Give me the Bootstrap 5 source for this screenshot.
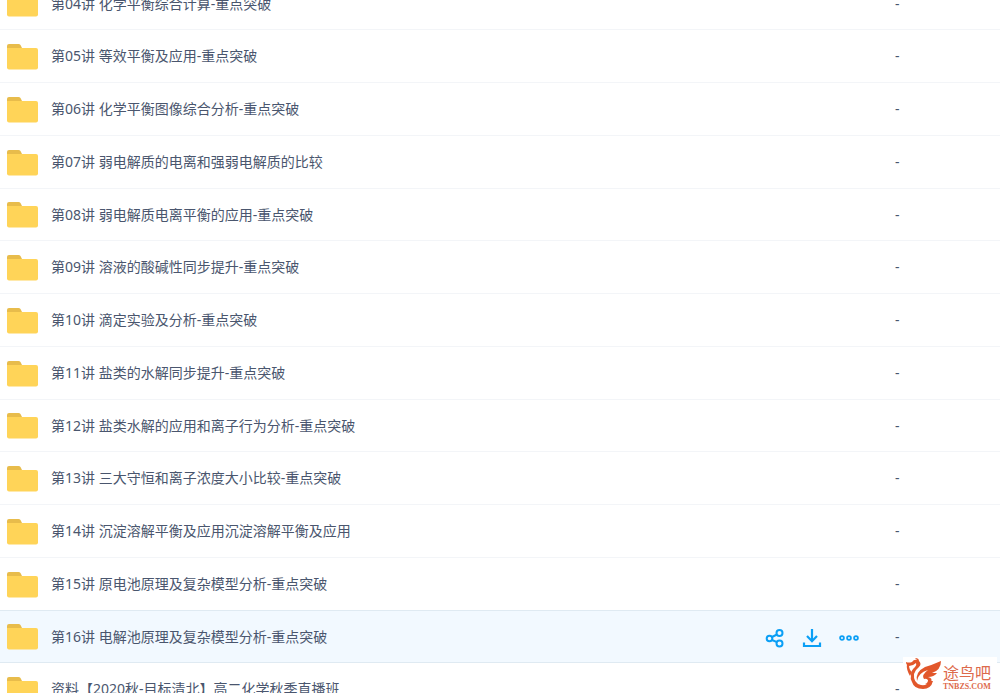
<!DOCTYPE html>
<html lang="zh-CN">
<head>
<meta charset="utf-8">
<meta name="viewport" content="width=device-width, initial-scale=1">
<title>文件列表</title>
<link href="https://cdn.jsdelivr.net/npm/bootstrap@5.3.0/dist/css/bootstrap.min.css" rel="stylesheet">
<style>
  body { font-family: "Noto Sans", "Noto Sans CJK SC", sans-serif; font-size: 14px; line-height: 20px; color: #4a566e; background: #fff; }
  /* the list is scrolled part of the way through its first row */
  .file-list { margin-top: -22px; }
  .file-row { height: 53px; padding-left: 7px; border-bottom: 1px solid #f3f5f8; }
  .file-row:nth-child(4n+1) { height: 52px; }
  .file-row.active-row { background: #f2f9ff; border-bottom-color: #dfeaf2; box-shadow: 0 -1px #dfeaf2; }
  .folder { width: 31px; height: 26px; margin-top: 1px; }
  .file-name { color: #4a566e; padding-left: 13px; }
  .file-size { width: 105px; }
  .tools { gap: 17px; margin: 2px 36px 0 0; }
  .tool { color: #0b9ff5; width: 20px; height: 20px; }
  .brand-mark { right: 3px; bottom: 2px; width: 94px; height: 34px; background: #fff; color: #dd6a4c; }
  .brand-mark svg { width: 40px; height: 33px; }
  .brand-cn { font-size: 16px; line-height: 18px; }
  .brand-en { font: bold 8px/9px "Liberation Serif", serif; }
</style>
</head>
<body>
<main class="position-relative vh-100 overflow-hidden">
  <svg class="d-none" aria-hidden="true">
    <symbol id="folder" viewBox="0 0 31 26">
      <path fill="#e8bc4b" d="M2 0h9.500q1.300 0 2 1.100L15 4v5H0V2q0-2 2-2z"/>
      <path fill="#ffd458" d="M0 4h29q2 0 2 2v17.500q0 2-2 2H2q-2 0-2-2z"/>
    </symbol>
  </svg>
  <ul class="file-list list-unstyled mb-0" id="files"></ul>
  <div class="brand-mark position-absolute d-flex align-items-end">
    <svg viewBox="0 0 40 33" fill="#e2572b" aria-hidden="true">
      <path d="M3 4Q6 5 9 4Q11 1 14 2L12 0Q16 0 16 3Q19 6 16 9Q12 12 11 16Q10 25 18 27Q24 28 27 23L30 23Q28 31 20 31Q11 31 9 24Q7 21 8 17Q8 12 12 9Q14 7 13 5Q10 8 6 8Q3 7 3 4z"/>
      <path d="M6 7Q6 12 9 14L7 18Q3 11 4 6z"/>
      <path d="M14 23Q12 14 22 9Q29 7 38 3Q38 12 29 15L34 15Q31 19 25 19Q30 20 28 24Q26 27 22 26Q25 25 25 22Q23 20 21 21Q18 17 25 12Q15 15 14 23z"/>
    </svg>
    <div class="text-nowrap">
      <div class="brand-cn">途鸟吧</div>
      <div class="brand-en">TNBZS.COM</div>
    </div>
  </div>
</main>
<template id="tools">
  <div class="tools d-flex align-items-center">
    <button type="button" class="tool btn p-0 border-0 d-flex" aria-label="分享">
      <svg viewBox="0 0 20 20" width="20" height="20" fill="none" stroke="currentColor" stroke-width="2"><circle cx="4.500" cy="10.500" r="2.800"/><circle cx="14.500" cy="5" r="3"/><circle cx="14.500" cy="15.500" r="3"/><path d="M7 9l5-2.500M7 12l5 2.200"/></svg>
    </button>
    <button type="button" class="tool btn p-0 border-0 d-flex" aria-label="下载">
      <svg viewBox="0 0 20 20" width="20" height="20" fill="none" stroke="currentColor" stroke-width="2.200"><path d="M10 1v12M5 8l5 5.200L15 8M2 14.500v3.500h16v-3.500"/></svg>
    </button>
    <button type="button" class="tool btn p-0 border-0 d-flex" aria-label="更多">
      <svg viewBox="0 0 20 20" width="20" height="20" fill="none" stroke="currentColor" stroke-width="1.800"><circle cx="3" cy="10" r="1.900"/><circle cx="10" cy="10" r="1.900"/><circle cx="17" cy="10" r="1.900"/></svg>
    </button>
  </div>
</template>
<script src="https://cdn.jsdelivr.net/npm/bootstrap@5.3.0/dist/js/bootstrap.bundle.min.js"></script>
<script>
  const names = [
    "第04讲 化学平衡综合计算-重点突破",
    "第05讲 等效平衡及应用-重点突破",
    "第06讲 化学平衡图像综合分析-重点突破",
    "第07讲 弱电解质的电离和强弱电解质的比较",
    "第08讲 弱电解质电离平衡的应用-重点突破",
    "第09讲 溶液的酸碱性同步提升-重点突破",
    "第10讲 滴定实验及分析-重点突破",
    "第11讲 盐类的水解同步提升-重点突破",
    "第12讲 盐类水解的应用和离子行为分析-重点突破",
    "第13讲 三大守恒和离子浓度大小比较-重点突破",
    "第14讲 沉淀溶解平衡及应用沉淀溶解平衡及应用",
    "第15讲 原电池原理及复杂模型分析-重点突破",
    "第16讲 电解池原理及复杂模型分析-重点突破",
    "资料【2020秋-目标清北】高二化学秋季直播班"
  ];
  const list = document.getElementById("files");
  names.forEach((name, i) => {
    const row = document.createElement("li");
    row.className = "file-row d-flex align-items-center";
    row.innerHTML = `<svg class="folder flex-shrink-0" aria-hidden="true"><use href="#folder"/></svg>
      <a href="#" class="file-name flex-grow-1 text-decoration-none text-truncate">${name}</a>
      <span class="file-size flex-shrink-0">-</span>`;
    if (i === 12) {
      row.classList.add("active-row");
      row.lastElementChild.before(document.getElementById("tools").content.cloneNode(true));
    }
    list.append(row);
  });
</script>
</body>
</html>
